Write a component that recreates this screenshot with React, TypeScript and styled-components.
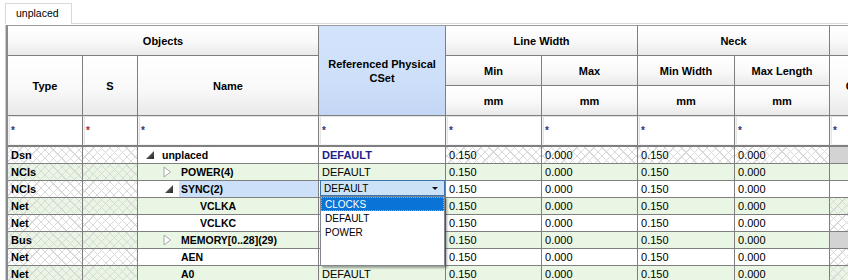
import React from "react";
import styled, { createGlobalStyle, css } from "styled-components";

const GlobalStyle = createGlobalStyle`
  html, body { margin: 0; padding: 0; background: #fff; overflow: hidden; }
  body { font-family: "Liberation Sans", Arial, sans-serif; color: #000; }
  *, *::before, *::after { box-sizing: border-box; }
`;

const GREEN = "#e8f6e3";
const LINE = "#7f7f7f";

const hatch = css`
  background-image:
    repeating-linear-gradient(45deg, transparent 0 5px, #d9d9d9 5px 6px),
    repeating-linear-gradient(-45deg, transparent 0 5px, #d9d9d9 5px 6px);
`;

const Page = styled.div`
  width: 848px;
  height: 280px;
  overflow: hidden;
  padding: 3px 0 0 5px;
`;

const TabStrip = styled.div`
  display: flex;
  height: 21px;
`;

const Tab = styled.div`
  width: 67px;
  height: 21px;
  border: 1px solid #d9d9d9;
  border-bottom: none;
  background: #fff;
  padding-left: 10px;
  font-size: 10.5px;
  line-height: 18px;
  color: #000;
`;

const TabFiller = styled.div`
  flex: 1;
  border-bottom: 1px solid #d9d9d9;
`;

const Panel = styled.div`
  margin-top: 1px;
  border-left: 1px solid #c9c9cf;
  overflow: hidden;
`;

const Grid = styled.table`
  border-collapse: separate;
  border-spacing: 0;
  table-layout: fixed;
  width: 932px;
  border-left: 2px solid #8a8a92;
  border-top: 1px solid #9a9a9a;
`;

const HeadRow = styled.tr<{ $h: number }>`
  height: ${(p) => p.$h}px;
`;

const HeadCell = styled.th<{ $accent?: boolean }>`
  border-right: 1px solid ${LINE};
  border-bottom: 1px solid ${LINE};
  background: ${(p) =>
    p.$accent
      ? "linear-gradient(#d4e3fc 0%, #cddff9 60%, #c3d6f4 100%)"
      : "linear-gradient(#ffffff 0%, #f9f9f9 55%, #e9e9e9 100%)"};
  font: bold 11px "Liberation Sans", Arial, sans-serif;
  line-height: 14px;
  text-align: center;
  vertical-align: middle;
  padding: 0 2px;
  overflow: hidden;
  color: #000;
`;

const FilterRow = styled.tr`
  height: 31px;
`;

const FilterCell = styled.td`
  border-right: 1px solid ${LINE};
  border-bottom: 2px solid ${LINE};
  padding: 0 0 1px 1px;
  background: #f3f3f3;
`;

const FilterBox = styled.div<{ $red?: boolean }>`
  height: 28px;
  background: #fff;
  box-shadow: inset 1px 1px 0 #e4e4e4;
  padding-left: 2px;
  display: flex;
  align-items: center;
  font: bold 10px "Liberation Sans", Arial, sans-serif;
  color: ${(p) => (p.$red ? "#a8282c" : "#28367e")};
`;

const DataRow = styled.tr<{ $green: boolean }>`
  height: 17px;
  background: ${(p) => (p.$green ? GREEN : "#fff")};
`;

type Fill = "plain" | "hatch" | "gray";

const Cell = styled.td<{ $fill?: Fill; $bold?: boolean; $color?: string }>`
  border-right: 1px solid ${LINE};
  border-bottom: 1px solid ${LINE};
  padding: 0 3px;
  height: 17px;
  font: ${(p) => (p.$bold ? "bold" : "normal")} 11px "Liberation Sans", Arial, sans-serif;
  line-height: 16px;
  color: ${(p) => p.$color || "#000"};
  white-space: nowrap;
  overflow: hidden;
  vertical-align: middle;
  ${(p) => p.$fill === "hatch" && hatch}
  ${(p) => p.$fill === "gray" && css`background: #d3d3d3;`}
`;

const NameCell = styled.td`
  border-right: 1px solid ${LINE};
  border-bottom: 1px solid ${LINE};
  padding: 0;
  height: 17px;
  white-space: nowrap;
  overflow: hidden;
`;

const TreeLine = styled.div<{ $level: number }>`
  display: flex;
  height: 16px;
  align-items: stretch;
  padding-left: ${(p) => 5 + p.$level * 19}px;
`;

const Toggle = styled.span`
  width: 17px;
  flex: none;
  display: flex;
  align-items: center;
`;

const Label = styled.span<{ $selected?: boolean }>`
  flex: 1;
  padding-left: 2px;
  font: bold 10.5px "Liberation Sans", Arial, sans-serif;
  line-height: 16px;
  background: ${(p) => (p.$selected ? "#cde0fa" : "transparent")};
`;

const CsetCell = styled.td`
  border-right: 1px solid ${LINE};
  border-bottom: 1px solid ${LINE};
  padding: 0;
  position: relative;
  height: 17px;
  overflow: visible;
`;

const Combo = styled.div`
  position: absolute;
  left: 1px;
  top: -1px;
  width: 125px;
  height: 16px;
  border: 1px solid #3f72aa;
  background: #cce3f7;
  padding-left: 3px;
  display: flex;
  align-items: center;
  justify-content: space-between;
  font: 10px "Liberation Sans", Arial, sans-serif;
  z-index: 2;
`;

const Arrow = styled.span`
  width: 0;
  height: 0;
  margin-right: 6px;
  border-left: 3px solid transparent;
  border-right: 3px solid transparent;
  border-top: 3px solid #111;
`;

const ListBox = styled.div`
  position: absolute;
  left: -1px;
  top: 15px;
  width: 125px;
  height: 70px;
  background: #fff;
  border: 1px solid #828790;
  box-shadow: 2px 2px 2px rgba(0, 0, 0, 0.35);
  padding: 0;
`;

const ListItem = styled.div<{ $active?: boolean }>`
  height: 14px;
  padding-left: 3px;
  font: 10px "Liberation Sans", Arial, sans-serif;
  line-height: 13px;
  color: ${(p) => (p.$active ? "#fff" : "#000")};
  background: ${(p) => (p.$active ? "#0a74d6" : "transparent")};
  border: 1px dotted ${(p) => (p.$active ? "#e79b3c" : "transparent")};
`;

const Expanded = () => (
  <svg width="11" height="10" viewBox="0 0 11 10" style={{ marginLeft: 1 }}>
    <defs>
      <linearGradient id="tg" x1="0" y1="0" x2="1" y2="1">
        <stop offset="0" stopColor="#7a7a7a" />
        <stop offset="1" stopColor="#262626" />
      </linearGradient>
    </defs>
    <polygon points="10,1 10,9 2,9" fill="url(#tg)" />
  </svg>
);

const Collapsed = () => (
  <svg width="9" height="12" viewBox="0 0 9 12" style={{ marginLeft: 1 }}>
    <polygon points="1,1 7.5,6 1,11" fill="#fff" stroke="#a9a9a9" strokeWidth="1" />
  </svg>
);

type Row = {
  type: string;
  level: number;
  node?: "open" | "closed";
  name: string;
  selected?: boolean;
  combo?: boolean;
  underList?: boolean;
  strongCset?: boolean;
  hatchValues?: boolean;
  last: Fill;
};

const rows: Row[] = [
  { type: "Dsn", level: 0, node: "open", name: "unplaced", strongCset: true, hatchValues: true, last: "gray" },
  { type: "NCIs", level: 1, node: "closed", name: "POWER(4)", last: "plain" },
  { type: "NCIs", level: 1, node: "open", name: "SYNC(2)", selected: true, combo: true, last: "plain" },
  { type: "Net", level: 2, name: "VCLKA", underList: true, last: "hatch" },
  { type: "Net", level: 2, name: "VCLKC", underList: true, last: "hatch" },
  { type: "Bus", level: 1, node: "closed", name: "MEMORY[0..28](29)", underList: true, last: "gray" },
  { type: "Net", level: 1, name: "AEN", underList: true, last: "hatch" },
  { type: "Net", level: 1, name: "A0", last: "hatch" },
];

const widths = [75, 55, 181, 127, 96, 96, 97, 95, 110];

export default function App() {
  return (
    <>
      <GlobalStyle />
      <Page>
        <TabStrip>
          <Tab>unplaced</Tab>
          <TabFiller />
        </TabStrip>
        <Panel>
          <Grid>
            <colgroup>
              {widths.map((w, i) => (
                <col key={i} style={{ width: w }} />
              ))}
            </colgroup>
            <thead>
              <HeadRow $h={30}>
                <HeadCell colSpan={3}>Objects</HeadCell>
                <HeadCell rowSpan={3} $accent>
                  Referenced Physical CSet
                </HeadCell>
                <HeadCell colSpan={2}>Line Width</HeadCell>
                <HeadCell colSpan={2}>Neck</HeadCell>
                <HeadCell />
              </HeadRow>
              <HeadRow $h={30}>
                <HeadCell rowSpan={2}>Type</HeadCell>
                <HeadCell rowSpan={2}>S</HeadCell>
                <HeadCell rowSpan={2}>Name</HeadCell>
                <HeadCell>Min</HeadCell>
                <HeadCell>Max</HeadCell>
                <HeadCell>Min Width</HeadCell>
                <HeadCell>Max Length</HeadCell>
                <HeadCell rowSpan={2}>Gather Control</HeadCell>
              </HeadRow>
              <HeadRow $h={30}>
                <HeadCell>mm</HeadCell>
                <HeadCell>mm</HeadCell>
                <HeadCell>mm</HeadCell>
                <HeadCell>mm</HeadCell>
              </HeadRow>
              <FilterRow>
                {widths.map((_, i) => (
                  <FilterCell key={i}>
                    <FilterBox $red={i === 1}>*</FilterBox>
                  </FilterCell>
                ))}
              </FilterRow>
            </thead>
            <tbody>
              {rows.map((r, i) => {
                const vf: Fill = r.hatchValues ? "hatch" : "plain";
                return (
                  <DataRow key={i} $green={i % 2 === 1}>
                    <Cell $bold $fill="hatch">{r.type}</Cell>
                    <Cell $fill="hatch" />
                    <NameCell>
                      <TreeLine $level={r.level}>
                        <Toggle>
                          {r.node === "open" && <Expanded />}
                          {r.node === "closed" && <Collapsed />}
                        </Toggle>
                        <Label $selected={r.selected}>{r.name}</Label>
                      </TreeLine>
                    </NameCell>
                    {r.combo ? (
                      <CsetCell>
                        <Combo>
                          <span>DEFAULT</span>
                          <Arrow />
                          <ListBox>
                            <ListItem $active>CLOCKS</ListItem>
                            <ListItem>DEFAULT</ListItem>
                            <ListItem>POWER</ListItem>
                          </ListBox>
                        </Combo>
                      </CsetCell>
                    ) : (
                      <Cell $bold={r.strongCset} $color={r.strongCset ? "#1e1e8c" : undefined}>
                        {r.underList ? "" : "DEFAULT"}
                      </Cell>
                    )}
                    <Cell $fill={vf}>0.150</Cell>
                    <Cell $fill={vf}>0.000</Cell>
                    <Cell $fill={vf}>0.150</Cell>
                    <Cell $fill={vf}>0.000</Cell>
                    <Cell $fill={r.last} />
                  </DataRow>
                );
              })}
            </tbody>
          </Grid>
        </Panel>
      </Page>
    </>
  );
}
